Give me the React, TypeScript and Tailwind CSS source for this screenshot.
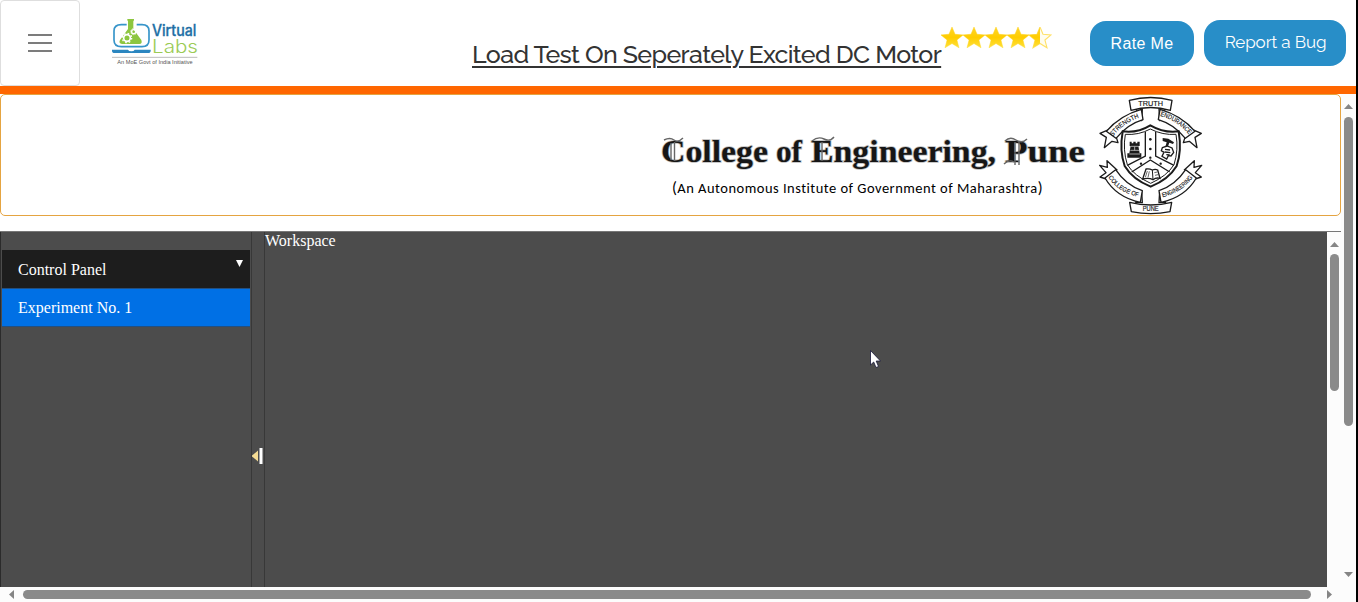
import React from "react";

const STAR = "M11 0 L14 7.3 L22 7.9 L15.9 13 L18 20.8 L11 16.5 L4 20.8 L6.1 13 L0 7.9 L8 7.3 Z";

function Stars() {
  return (
    <svg width="111" height="22" viewBox="0 0 111 22" className="block">
      <defs>
        <linearGradient id="gold" x1="0" y1="0" x2="0" y2="1">
          <stop offset="0" stopColor="#ffd52a" />
          <stop offset="0.5" stopColor="#ffcd00" />
          <stop offset="1" stopColor="#ffe03a" />
        </linearGradient>
        <clipPath id="half"><rect x="0" y="0" width="11" height="22" /></clipPath>
      </defs>
      {[0, 1, 2, 3].map((i) => (
        <path key={i} d={STAR} transform={`translate(${i * 22} 0)`} fill="url(#gold)" stroke="url(#gold)" strokeWidth="0.5" />
      ))}
      <g transform="translate(88 0)">
        <path d={STAR} fill="#fffdf0" stroke="#ffe168" strokeWidth="1.1" />
        <path d={STAR} fill="url(#gold)" clipPath="url(#half)" />
      </g>
    </svg>
  );
}

function VirtualLabsLogo() {
  return (
    <svg width="88" height="50" viewBox="0 0 264 150" className="block shrink-0">
      <path d="M44 17 H28 Q6 17 6 36 V63 Q6 83 28 83 H90 Q111 83 111 63 V36 Q111 17 90 17 H74" fill="none" stroke="#3795ca" strokeWidth="5" />
      <path d="M0 92 H48 Q50 97 58 97 Q66 97 68 92 H116 V95 Q116 102 108 102 H8 Q0 102 0 95 Z" fill="#2b86c0" />
      <path d="M46 0 H66 V4 L64 7 V30 L88 63 Q92 75 82 75 H30 Q19 73 24 63 L48 30 V7 L46 4 Z" fill="#8dc63f" />
      <circle cx="45" cy="57" r="10" fill="none" stroke="#fff" strokeWidth="5" />
      <circle cx="45" cy="57" r="14" fill="none" stroke="#fff" strokeWidth="4" strokeDasharray="5 6" />
      <circle cx="65" cy="38" r="6" fill="none" stroke="#fff" strokeWidth="4" />
      <circle cx="65" cy="38" r="9" fill="none" stroke="#fff" strokeWidth="3" strokeDasharray="3.5 3.5" />
      <text x="120" y="51" textLength="133" lengthAdjust="spacingAndGlyphs" className="font-['Inter',sans-serif] font-medium" fontSize="46" fill="#226fa5" stroke="#226fa5" strokeWidth="1">Virtual</text>
      <text x="120" y="101" textLength="138" lengthAdjust="spacingAndGlyphs" className="font-['Inter',sans-serif] font-light" fontSize="54" fill="#9bcb55">Labs</text>
      <path d="M0 115 H256" stroke="#999" strokeWidth="2" />
      <text x="16" y="136" textLength="226" lengthAdjust="spacingAndGlyphs" className="font-['Liberation_Sans',sans-serif]" fontSize="16" fill="#555">An MoE Govt of India Initiative</text>
    </svg>
  );
}

function CollegeName() {
  return (
    <svg width="430" height="44" viewBox="0 0 430 44" className="block">
      <g className="font-['Liberation_Serif',serif] font-bold" fontSize="31">
        {[
          { t: "College", x: 2, w: 107 },
          { t: "of", x: 117, w: 26 },
          { t: "Engineering,", x: 152, w: 185 },
          { t: "Pune", x: 346, w: 80 },
        ].map((p) => (
          <text key={p.t} x={p.x} y="28" textLength={p.w} lengthAdjust="spacingAndGlyphs" fill="#161616" stroke="#bdbdbd" strokeWidth="1.6" paintOrder="stroke">{p.t}</text>
        ))}
      </g>
      <g fill="none" stroke="#666" strokeWidth="1.4">
        <path d="M12 9 V26 M15.5 8 V27 M5 6 Q11 3 15 6 T24 4" />
        <path d="M163 8 V27 M153 7 Q159 2 165 5 T175 3" />
        <path d="M346 7 Q351 2 357 6 T368 5 M356 8 V31 M360 8 V31 M345 30 Q350 25 355 28" />
      </g>
    </svg>
  );
}

const SHIELD = "M98 124 Q142 130 181 106 Q222 130 266 124 Q276 182 260 228 Q236 268 182 290 Q128 268 104 228 Q88 182 98 124 Z";

function Emblem() {
  return (
    <svg width="105" height="120" viewBox="24 15 315 360" className="block">
      <defs>
        <path id="arcA" d="M68 140 Q100 97 156 80" />
        <path id="arcB" d="M210 77 Q268 95 300 138" />
        <path id="arcC" d="M55 262 Q82 305 148 322" />
        <path id="arcD" d="M218 322 Q280 305 311 259" />
      </defs>
      <g fill="#fff" stroke="#1b1b1b" strokeWidth="4" strokeLinejoin="round">
        <path d="M137 55 L155 92 L157 56 Z M227 55 L209 92 L207 56 Z" />
        <path d="M58 118 L30 130 L49 142 L43 173 L66 154 L84 158 L78 139" />
        <path d="M306 118 L334 130 L315 142 L321 173 L298 154 L280 158 L286 139" />
        <path d="M154 58 Q90 76 49 124 L78 145 Q112 103 159 89 Z" />
        <path d="M210 58 Q274 76 315 124 L286 145 Q252 103 205 89 Z" />
        <path d="M118 31 Q182 14 246 31 L241 61 Q182 44 123 61 Z" />
        <path d="M58 270 L30 261 L48 248 L29 226 L52 232 L51 212 L82 241" />
        <path d="M306 270 L334 261 L316 248 L335 226 L312 232 L313 212 L282 241" />
        <path d="M137 337 L155 304 L157 338 Z M227 337 L209 304 L207 338 Z" />
        <path d="M77 239 Q108 286 157 302 L151 337 Q79 322 45 264 Z" />
        <path d="M287 239 Q256 286 207 302 L213 337 Q285 322 319 264 Z" />
        <path d="M119 337 Q182 353 245 337 L240 365 Q182 377 124 365 Z" />
      </g>
      <path d={SHIELD} fill="#fff" stroke="#1b1b1b" strokeWidth="6" />
      <path d="M106 133 Q146 136 181 117 Q218 136 258 133 Q266 180 252 224 Q231 258 182 280 Q133 258 112 224 Q98 180 106 133 Z" fill="none" stroke="#1b1b1b" strokeWidth="3" />
      <g fill="none" stroke="#1b1b1b" strokeWidth="4">
        <path d="M166 125 V198 L112 226 M197 125 V198 L252 226" />
        <path d="M125 246 L181 210 L239 246" />
      </g>
      <g fill="#1b1b1b">
        <circle cx="181" cy="148" r="4" /><circle cx="181" cy="177" r="4" />
        <circle cx="181" cy="203" r="3.5" /><circle cx="153" cy="221" r="3.5" /><circle cx="212" cy="221" r="3.5" />
        <path d="M119 155 H125 V160 H130 V155 H137 V160 H142 V155 H149 V168 H145 L149 190 H154 V203 H112 V190 H118 L122 168 H119 Z" />
        <path d="M218 144 L235 146 L252 157 L249 162 L238 158 L232 174 L226 171 L230 157 L218 153 Z" />
      </g>
      <g stroke="#eee" strokeWidth="2" fill="none"><path d="M123 169 H145 M121 181 H147 M118 192 H150 M134 170 V181" /></g>
      <g fill="#fff" stroke="#1b1b1b" strokeWidth="4">
        <path d="M217 173 L231 168 L246 174 L251 187 L243 198 L235 197 L230 207 L216 199 L222 187 L214 182 Z" />
        <path d="M225 178 L240 180 M224 186 L241 188 M229 194 L239 195" />
        <path d="M168 237 Q178 235 187 240 Q196 236 203 240 L210 265 Q198 262 189 269 Q176 262 158 267 Z" />
        <path d="M187 240 L189 269" strokeWidth="3" />
        <path d="M172 243 L166 262 M178 244 L174 262 M193 248 L202 246 M195 256 L204 254" strokeWidth="2" />
      </g>
      <g className="font-['Liberation_Sans',sans-serif]" fill="#111" stroke="#111" strokeWidth="0.4" fontSize="19">
        <text x="145" y="49" textLength="74" lengthAdjust="spacingAndGlyphs">TRUTH</text>
        <text fontSize="20"><textPath href="#arcA" textLength="99" lengthAdjust="spacingAndGlyphs">STRENGTH</textPath></text>
        <text fontSize="20"><textPath href="#arcB" textLength="105" lengthAdjust="spacingAndGlyphs">ENDURANCE</textPath></text>
        <text fontSize="19"><textPath href="#arcC" textLength="110" lengthAdjust="spacingAndGlyphs">COLLEGE OF</textPath></text>
        <text fontSize="19"><textPath href="#arcD" textLength="110" lengthAdjust="spacingAndGlyphs">ENGINEERING</textPath></text>
        <text x="158" y="364" textLength="48" lengthAdjust="spacingAndGlyphs">PUNE</text>
      </g>
    </svg>
  );
}

function Arrow({ d, className = "" }: { d: string; className?: string }) {
  return (
    <svg width="9" height="9" viewBox="0 0 9 9" className={`block shrink-0 ${className}`}>
      <path d={d} fill="#858585" />
    </svg>
  );
}

const UP = "M0 7 L4.5 2 L9 7 Z";
const DOWN = "M0 2 L4.5 7 L9 2 Z";
const LEFT = "M7 0 L2 4.5 L7 9 Z";
const RIGHT = "M2 0 L7 4.5 L2 9 Z";

export default function App() {
  return (
    <div className="relative flex h-[602px] w-[1358px] flex-col overflow-hidden border-r-2 border-black bg-white">
      <header className="flex h-[86px] shrink-0 items-start">
        <button className="flex h-[86px] w-20 shrink-0 items-center justify-center rounded-[4px] border border-[#dedede]">
          <svg width="24" height="20" viewBox="0 0 24 20" className="block">
            <path d="M0 2 H24 M0 10 H24 M0 18 H24" stroke="#7c7c7c" strokeWidth="2" />
          </svg>
        </button>
        <div className="ml-8 mt-[19px] w-[88px] shrink-0"><VirtualLabsLogo /></div>
        <h1 className="ml-[272px] mt-9 w-[469px] shrink-0 whitespace-nowrap font-['Raleway','Lato',sans-serif] text-[25px] font-medium leading-9 tracking-[-0.625px] text-[#333] underline decoration-2 underline-offset-[3px]">
          Load Test On Seperately Excited DC Motor
        </h1>
        <div className="mt-[27px] w-[110px] shrink-0"><Stars /></div>
        <button className="ml-[39px] mt-[21px] h-[45px] w-[104px] shrink-0 rounded-[16px] bg-[#288ec8] font-['Liberation_Sans',sans-serif] text-base tracking-[0.35px] text-white">Rate Me</button>
        <button className="ml-[10px] mt-5 h-[46px] w-[142px] shrink-0 rounded-[16px] bg-[#288ec8] pl-px font-['Raleway','Lato',sans-serif] text-[17px] tracking-[-0.1px] text-white">Report a Bug</button>
      </header>
      <div className="h-2 shrink-0 bg-[#ff6600]" />
      <div className="flex h-[508px]">
        <main className="flex w-[1341px] shrink-0 flex-col">
          <section className="flex h-[122px] shrink-0 rounded-[5px] border border-[#e5a441] bg-white">
            <div className="ml-[658px] mt-[39px] w-[430px] shrink-0">
              <CollegeName />
              <p className="ml-[13px] mt-[-2px] whitespace-nowrap font-['Carlito','Lato',sans-serif] text-[14.5px] leading-5 tracking-[0.49px] text-black">
                <span className="text-base">(</span>An Autonomous Institute of Government of Maharashtra<span className="text-base">)</span>
              </p>
            </div>
            <div className="ml-[9px]"><Emblem /></div>
          </section>
          <section className="mt-[15px] flex h-[356px] shrink-0 border-t border-[#777]">
            <aside className="w-[251px] shrink-0 border-l border-[#2b2b2b] bg-[#4c4c4c] pt-[18px] font-['Liberation_Serif',serif] text-base text-white">
              <div className="ml-px mr-px flex h-[38px] items-center justify-between bg-[#1d1d1d] pl-4 pr-[7px]">
                <span className="pt-0.5">Control Panel</span>
                <svg width="7" height="7" viewBox="0 0 7 7" className="mb-3 block"><path d="M0 0 H7 L3.5 7 Z" fill="#fff" /></svg>
              </div>
              <div className="ml-px mr-px flex h-[39px] items-center border-y border-[#234f80] bg-[#0070e5] pl-4">Experiment No. 1</div>
            </aside>
            <div className="flex w-[14px] shrink-0 items-center border-x border-[#383838] bg-[#4c4c4c]">
              <svg width="12" height="18" viewBox="0 0 12 18" className="mt-[93px] block">
                <path d="M6 3.5 V14.5 L-0.5 9 Z" fill="#f5dc94" />
                <rect x="7.5" y="1" width="3" height="16" fill="#fff" />
              </svg>
            </div>
            <div className="w-[1062px] shrink-0 bg-[#4c4c4c] font-['Liberation_Serif',serif] text-base leading-[18px] text-white">Workspace</div>
            <div className="flex w-[14px] flex-col items-center bg-[#fcfcfc] pt-2">
              <Arrow d={UP} />
              <div className="mt-[5px] h-[137px] w-[9px] rounded-full bg-[#8a8a8a]" />
            </div>
          </section>
          <div className="flex h-[15px] items-center bg-[#fcfcfc] pl-[7px]">
            <Arrow d={LEFT} />
            <div className="ml-[7px] h-[9px] w-[1288px] rounded-full bg-[#8a8a8a]" />
            <Arrow d={RIGHT} className="ml-[14px]" />
          </div>
        </main>
        <div className="flex w-[15px] flex-col items-center bg-[#fcfcfc] pb-[23px] pt-2">
          <Arrow d={UP} />
          <div className="mt-[6px] h-[309px] w-[9px] rounded-full bg-[#8a8a8a]" />
          <Arrow d={DOWN} className="mt-auto" />
        </div>
      </div>
      <svg width="12" height="19" viewBox="0 0 12 19" className="absolute left-[870px] top-[350px]">
        <path d="M0.5 0.5 V15 L3.7 12 L6 17.5 L8.5 16.5 L6.2 11 H10.5 Z" fill="#fff" stroke="#17173a" strokeWidth="0.8" />
      </svg>
    </div>
  );
}
